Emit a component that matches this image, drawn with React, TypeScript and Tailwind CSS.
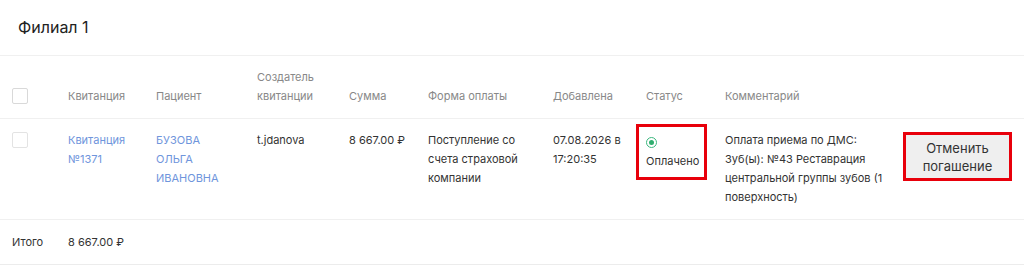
import React from "react";

const cols = "grid grid-cols-[56px_88px_101px_92px_79px_125px_93px_79px_180px_131px]";

export default function App() {
  return (
    <div className="w-[1024px] h-[268px] bg-white text-[11px] leading-[19px] text-[#333]" style={{ fontFamily: "Inter, 'Noto Sans', sans-serif" }}>
      <div className="h-[56px] flex items-center px-[18px] text-[16px] text-[#222] border-b border-[#f0f0f0]">Филиал 1</div>
      <div className={`${cols} h-[63px] items-end border-b border-[#f0f0f0] text-[#888]`}>
        <div className="px-3 pb-[14px]">
          <div className="w-4 h-4 border border-[#d9d9d9] rounded-[2px] bg-white" />
        </div>
        <div className="px-3 pb-3">Квитанция</div>
        <div className="px-3 pb-3">Пациент</div>
        <div className="px-3 pb-3">Создатель квитанции</div>
        <div className="px-3 pb-3">Сумма</div>
        <div className="px-3 pb-3">Форма оплаты</div>
        <div className="px-3 pb-3">Добавлена</div>
        <div className="px-3 pb-3">Статус</div>
        <div className="px-3 pb-3">Комментарий</div>
        <div className="px-3 pb-3"></div>
      </div>
      <div className={`${cols} h-[101px] items-start border-b border-[#f0f0f0]`}>
        <div className="px-3 pt-[13px]">
          <div className="w-4 h-4 border border-[#e3e3e3] rounded-[2px] bg-white" />
        </div>
        <div className="px-3 pt-3 text-[#6f95dc]">Квитанция №1371</div>
        <div className="px-3 pt-3 text-[#6f95dc]">БУЗОВА ОЛЬГА ИВАНОВНА</div>
        <div className="px-3 pt-3">t.jdanova</div>
        <div className="pl-3 pt-3 whitespace-nowrap">8 667.00 ₽</div>
        <div className="px-3 pt-3">Поступление со счета страховой компании</div>
        <div className="px-3 pt-3">07.08.2026 в 17:20:35</div>
        <div className="pl-[2px] pt-[5px]">
          <div className="w-[71px] h-[56px] border-[3px] border-[#e8000b] pl-[7px] pt-[6px]">
            <div className="h-[19px] flex items-center">
              <div className="w-[11px] h-[11px] rounded-full border border-[#3bb77e] flex items-center justify-center">
                <div className="w-[5px] h-[5px] rounded-full bg-[#2fae6f]" />
              </div>
            </div>
            <div>Оплачено</div>
          </div>
        </div>
        <div className="pl-3 pr-[2px] pt-3">Оплата приема по ДМС: Зуб(ы): №43 Реставрация центральной группы зубов (1 поверхность)</div>
        <div className="pl-[10px] pt-[13px]">
          <div className="w-[109px] h-[49px] border-[3px] border-[#e8000b] bg-[#efefef] flex flex-col items-center justify-center text-[13px] leading-[18px] text-[#333]">
            <span>Отменить</span>
            <span>погашение</span>
          </div>
        </div>
      </div>
      <div className="flex h-[45px] items-center border-b border-[#ececec]">
        <div className="w-[56px] pl-3">Итого</div>
        <div className="pl-3">8 667.00 ₽</div>
      </div>
    </div>
  );
}
